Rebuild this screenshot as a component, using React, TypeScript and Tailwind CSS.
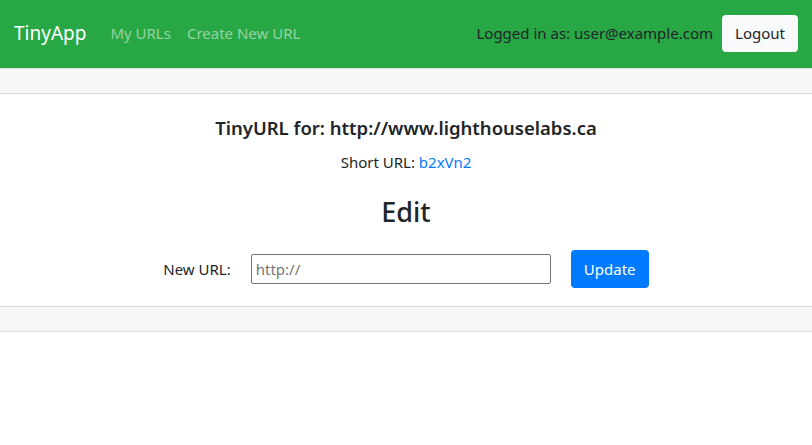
export default function App() {
  return (
    <div className="min-h-screen bg-white text-[#212529] text-[15px] leading-[1.5] [font-family:'Noto_Sans',sans-serif]">
      {/* Navbar */}
      <nav className="flex h-[68px] items-center bg-[#28a745] px-[14px] pb-[2px]">
        <a className="mr-[24px] text-[19px] text-white">TinyApp</a>
        <div className="flex gap-4 text-[rgba(255,255,255,0.5)]">
          <a>My URLs</a>
          <a>Create New URL</a>
        </div>
        <div className="ml-auto flex items-center gap-[9px]">
          <span className="text-[#212529]">Logged in as: user@example.com</span>
          <button className="h-[37px] w-[76px] rounded-[4px] bg-[#f8f9fa] text-[#212529]">Logout</button>
        </div>
      </nav>

      {/* Card */}
      <div className="border-y border-[rgba(0,0,0,0.125)]">
        <div className="h-[25px] border-b border-[rgba(0,0,0,0.125)] bg-[#f7f7f7]"></div>
        <div className="flex flex-col items-center pt-[23px] pb-[18px]">
          <h3 className="text-[18.5px] font-semibold leading-[1.2]">TinyURL for: http://www.lighthouselabs.ca</h3>
          <p className="mt-[12px]">
            Short URL: <a className="text-[#007bff]">b2xVn2</a>
          </p>
          <h2 className="mt-[22px] text-[27px] font-medium leading-[1.2]">Edit</h2>
          <form className="mt-[22px] flex items-center">
            <label className="mr-[20px]">New URL:</label>
            <input
              placeholder="http://"
              className="h-[30px] w-[300px] rounded-[2px] border border-[#767676] px-1 text-[15px] placeholder:text-[#757575]"
            />
            <button type="button" className="ml-[20px] h-[38px] w-[78px] rounded-[4px] bg-[#007bff] text-white">
              Update
            </button>
          </form>
        </div>
        <div className="h-[25px] border-t border-[rgba(0,0,0,0.125)] bg-[#f7f7f7]"></div>
      </div>
    </div>
  );
}
